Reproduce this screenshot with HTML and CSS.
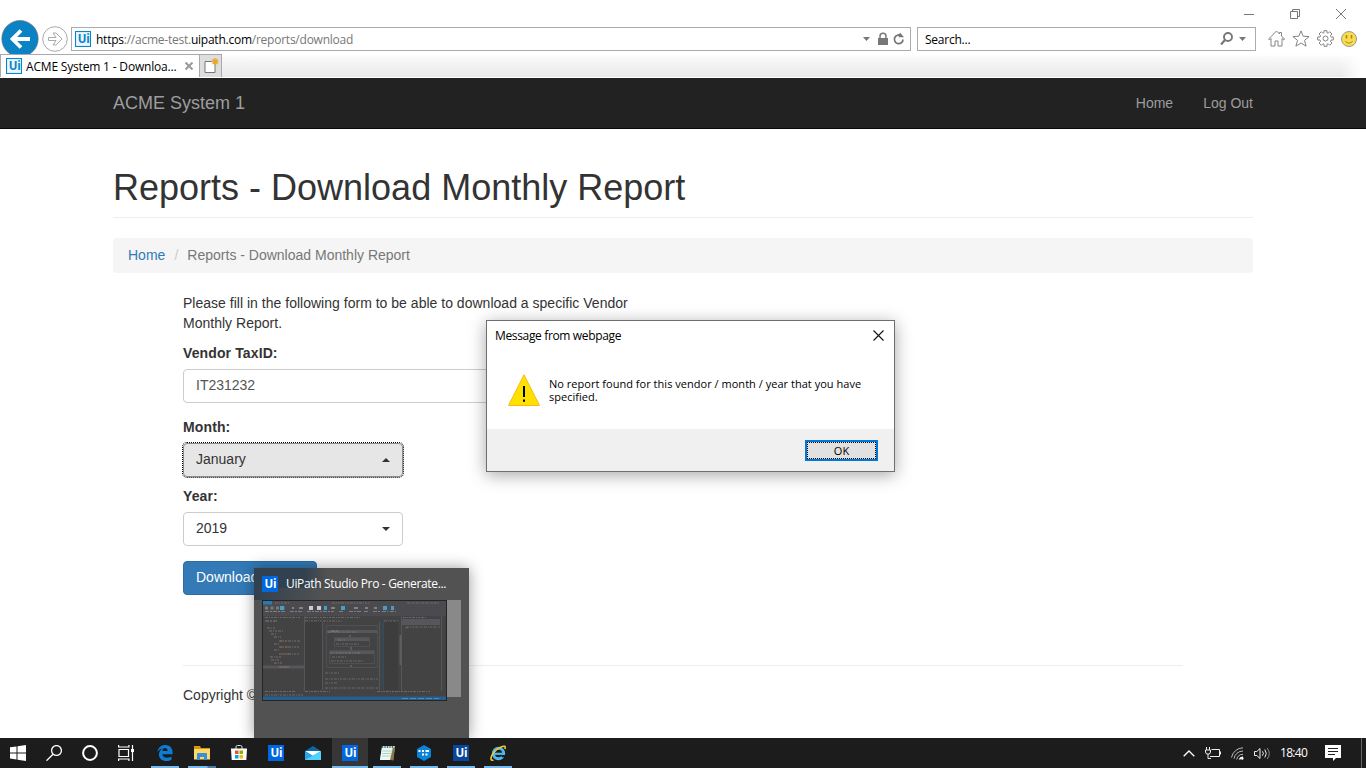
FILE: index.html
```html
<!DOCTYPE html>
<html lang="en">
<head>
<meta charset="utf-8">
<title>ACME System 1 - Download Monthly Report</title>
<link rel="stylesheet" href="styles.css">
</head>
<body>
<div class="desktop">
  <header class="browser">
    <div class="caption">
      <svg width="10" height="10"><path d="M0 5.500h10" stroke="#777"/></svg>
      <svg width="10" height="10" fill="none" stroke="#777"><path d="M.5 2.500h7v7h-7zM2.500 2.500v-2h7v7h-2"/></svg>
      <svg width="10" height="10" stroke="#777"><path d="M0 0l10 10M10 0L0 10"/></svg>
    </div>
    <div class="toolbar">
      <svg class="back" width="38" height="34" viewBox="0 0 38 34"><circle cx="19" cy="18.700" r="18.200" fill="#0a82c4" stroke="#777" stroke-width=".7"/><path d="M29 19H11M20 10.500L11.500 19l8.500 8.500" fill="none" stroke="#fff" stroke-width="3.800"/></svg>
      <svg class="forward" width="26" height="26" fill="none" stroke="#aaa"><circle cx="13" cy="13" r="12.300"/><path d="M6.500 11.500h7.500l-3-4.500h3l6 6-6 6h-3l3-4.500H6.500z"/></svg>
      <div class="field address">
        <svg class="favicon" width="16" height="16"><rect width="16" height="16" fill="#0a85ca"/><rect x="1.500" y="1.500" width="13" height="13" fill="none" stroke="#d9effb"/><text x="2.800" y="12.200">Ui</text></svg>
        <span class="url"><b>https</b>://acme-test.<b>uipath.com</b>/reports/download</span>
        <svg class="addr-icons" width="42" height="16" viewBox="0 0 42 16"><path d="M0 6h7L3.500 10z" fill="#777"/><path d="M15 7h10v7H15z" fill="#777"/><path d="M17 7V5.300a3 3 0 0 1 6 0V7" fill="none" stroke="#777" stroke-width="1.500"/><path d="M40 8.500a4.300 4.300 0 1 1-2-3.800" fill="none" stroke="#777" stroke-width="1.800"/><path d="M37 1.500l4 4.700h-5.500z" fill="#777"/></svg>
      </div>
      <div class="field search">
        <span>Search...</span>
        <svg width="27" height="16" viewBox="0 0 27 16"><circle cx="8" cy="6" r="4" fill="none" stroke="#777" stroke-width="1.900"/><path d="M5 9L1 13.500" stroke="#777" stroke-width="2.200"/><path d="M19 6h7l-3.500 4z" fill="#777"/></svg>
      </div>
      <div class="tools">
        <svg width="17" height="17" fill="none" stroke="#858585"><path d="M.7 9L8.500 1l3 3V2.500h2V6l3 3-.7 1-1.800-1.500v7.500h-4v-5H7v5H3V8.500L1.500 10z"/></svg>
        <svg width="18" height="17" fill="none" stroke="#858585"><path d="M9 .9l2.200 5.300 5.900.4-4.600 3.700 1.600 5.900L9 13l-5.100 3.200 1.600-5.900L.9 6.600l5.900-.4z"/></svg>
        <svg width="17" height="17" viewBox="0 0 17 17" fill="none" stroke="#858585"><circle cx="8.500" cy="8.500" r="2.500"/><path d="M7 .7h3v2l1.200.5 1.500-1.500 2.300 2.300-1.500 1.500.5 1.500h2.300v3H14l-.5 1.500 1.500 1.500-2.300 2.300-1.500-1.500-1.200.5v2H7v-2l-1.200-.5-1.500 1.500L2 13l1.500-1.500L3 10H.7V7H3l.5-1.500L2 4l2.300-2.300 1.500 1.500L7 2.700z"/></svg>
        <svg width="16" height="16"><circle cx="8" cy="8" r="7.500" fill="#fbdc4d" stroke="#999"/><path d="M5.500 4v3.500M10.500 4v3.500" stroke="#a58a20" stroke-width="1.600"/><path d="M4.300 10.200Q8 14 11.700 10.200" fill="none" stroke="#a58a20"/></svg>
      </div>
    </div>
    <div class="tabs">
      <div class="tab">
        <svg class="favicon" width="16" height="16"><rect width="16" height="16" fill="#0a85ca"/><rect x="1.500" y="1.500" width="13" height="13" fill="none" stroke="#d9effb"/><text x="2.800" y="12.200">Ui</text></svg>
        <span>ACME System 1 - Downloa...</span>
        <svg width="8" height="8" stroke="#999" stroke-width="2"><path d="M.5.5l7 7M7.500.5l-7 7"/></svg>
      </div>
      <div class="newtab"><svg width="15" height="16" viewBox="0 0 15 16"><path d="M1 3.500h10v11H1z" fill="#fff" stroke="#777"/><path d="M11 0v7M7.500 3.500h7M8.600 1l5 5M13.500 1l-5 5" stroke="#efa628" stroke-width="1.300"/></svg></div>
    </div>
  </header>

  <nav class="navbar"><span class="brand">ACME System 1</span><a>Home</a><a>Log Out</a></nav>

  <main class="page">
    <h1>Reports - Download Monthly Report</h1>
    <div class="breadcrumb"><a>Home</a><i>/</i><span>Reports - Download Monthly Report</span></div>
    <form class="form">
      <div class="intro"><span>Please fill in the following form to be able to download a specific Vendor</span><span>Monthly Report.</span></div>
      <label>Vendor TaxID:</label>
      <div class="control taxid">IT231232</div>
      <label>Month:</label>
      <div class="control select open">January<svg width="8" height="4"><path d="M0 4h8L4 0z" fill="#333"/></svg></div>
      <label>Year:</label>
      <div class="control select">2019<svg width="8" height="4"><path d="M0 0h8L4 4z" fill="#333"/></svg></div>
      <div class="submit">Download</div>
    </form>
    <footer>Copyright ©</footer>
  </main>

  <section class="dialog">
    <div class="dialog-title"><span>Message from webpage</span><svg width="11" height="11" stroke="#111" stroke-width="1.100"><path d="M.5.5l10 10M10.500.5l-10 10"/></svg></div>
    <div class="dialog-body">
      <svg width="32" height="32"><path d="M16 .8L31.500 31.500H.5z" fill="#ffe100" stroke="#fdb913"/><path d="M16 12v11M16 25.500v2.200" stroke="#000" stroke-width="2"/></svg>
      <p>No report found for this vendor / month / year that you have<br>specified.</p>
    </div>
    <div class="dialog-footer"><div class="ok"><span>OK</span></div></div>
  </section>

  <aside class="preview">
    <div class="preview-title"><svg class="uitile" width="16" height="16"><rect width="16" height="16" fill="#0067df"/><text x="2.500" y="12.200">Ui</text></svg><span>UiPath Studio Pro - Generate...</span></div>
    <div class="preview-shot">
      <svg width="185" height="101" viewBox="0 0 185 101">
        <rect width="185" height="101" fill="#252525"/><rect x="1" y="1" width="183" height="99" fill="#434343"/>
        <path fill="#4b4b4f" d="M1 1h183v15H1z"/><path fill="#287ab5" d="M1 1h9v3.500H1z"/><path fill="#245f90" d="M1 96.500h183v3.500H1z"/>
        <path fill="#3d3d3d" d="M43 21h18v69H43zM122 21h14v69h-14z"/>
        <path stroke="#565659" d="M42.500 16v75M60.500 22v68M117.500 22v68M139.500 16v75M179.500 16v75"/>
        <path stroke="#28506e" d="M121.500 22v68"/><path stroke="#5e5e62" d="M138.500 35v30" stroke-width="2"/>
        <path fill="#56565c" d="M1 65.500h41v3H1zM140 19h38v6h-38zM65 30h50v3H65zM73 38h35v3H73zM67 51h46v3H67z"/>
        <g fill="none" stroke="#505053"><path d="M64.500 25.500h51v42h-51zM72.500 37.500h35v9h-35zM67.500 50.500h45v13h-45z"/></g>
        <g stroke="#999" stroke-dasharray="3 1 1 1 2 1"><path d="M13 3h14M70 3h37M145 3h32M3 17.500h36M43 17.500h55M141 17.500h24M43 21h37M122 21h15M66 32h28M76 40h7M68 53h30M74 44h24M70 57h14M69 61h32M63 73h15M63 79h54M63 83h13M63 88h54M3 91.500h30M43 91.500h25M115 91.500h54M3 95h38M144 27h34" opacity=".45"/><path d="M5 28h8M7 31h14M9 34h5M12 37h7M17 41h22M12 44h6M17 47h20M12 50h5M17 54h20M8 57h11M9 60h8M12 63h8M17 67h10" opacity=".55"/></g>
        <path stroke="#a05850" stroke-dasharray="3 2" d="M18 41h6M18 47h8M20 54h8M20 67h6M143 28h4" opacity=".8"/>
        <path stroke="#aaa" stroke-width="3" stroke-dasharray="3 2.500" d="M3 8h21" opacity=".5"/>
        <path stroke="#aaa" stroke-width="2" d="M30 8h2M37 8h4M69 8h4M92 8h4M103 8h3M112 8h3" opacity=".6"/>
        <path stroke="#ccc" stroke-width="4" d="M47 8h4M55 8h4"/>
        <path stroke="#459fce" stroke-width="4" d="M18 8h4M62 8h3M79 8h4M121 8h4M129 8h3"/>
        <path stroke="#aaa" stroke-dasharray="4 1 2 1" d="M3 11.500h21M28 11.500h13M45 11.500h27M77 11.500h5M87 11.500h12M102 11.500h5M111 11.500h7M120 11.500h6M128 11.500h6M3 21h12M69 31h8" opacity=".55"/>
        <path d="M88 35v2M89 47v3M89 65v2" stroke="#777"/><path stroke="#6ba4cc" stroke-dasharray="6 2" d="M140 98.500h37" opacity=".6"/>
      </svg>
    </div>
  </aside>

  <div class="taskbar">
    <div class="sys"><svg width="16" height="16" fill="#fff"><path d="M0 2.300l6.500-.9v6H0zM7.500 1.300L16 0v7.400H7.500zM0 8.500h6.500v6L0 13.600zM7.500 8.500H16V16l-8.500-1.200z"/></svg></div>
    <div class="sys"><svg width="16" height="16" fill="none" stroke="#fff" stroke-width="1.300"><circle cx="10.500" cy="5.500" r="4.900"/><path d="M7 9.200L.5 15.700"/></svg></div>
    <div class="sys"><svg width="16" height="16" fill="none" stroke="#fff" stroke-width="2"><circle cx="8" cy="8" r="6.900"/></svg></div>
    <div class="sys"><svg width="16" height="16" fill="none" stroke="#fff" stroke-width="1.200"><path d="M1 4.500h9.500v7H1zM.6 0v2h10.300V0M.6 16v-2h10.300v2M14.500 0v16"/><path d="M13 4h3v3h-3z" fill="#fff" stroke="none"/></svg></div>
    <div class="apps">
      <div class="app running"><svg width="16" height="16" viewBox="0 0 16 16"><path fill="#0c7cd6" d="M.4 7C1.200 2.500 4.300 0 8.300 0c4.500 0 7.300 3.200 7.300 7.300v2H5.300c.2 2.500 2.400 3.500 4.900 3.500 1.700 0 3.200-.5 4.300-1.200v3.200C13.300 15.600 11.500 16 9.500 16 4.800 16 1.900 13.300 1.900 9.500c0-2.600 1.400-4.700 4-6C3.600 3.700 1.700 5 .4 7zm5-1h5.200c0-1.900-1-2.900-2.600-2.900C6.600 3.100 5.600 4.300 5.400 6z"/></svg></div>
      <div class="app running grouped"><svg width="16" height="14" viewBox="0 0 16 14"><path d="M0 0h6l1 2h9v11H0z" fill="#d9980b"/><path d="M0 3h16v10.500H0z" fill="#ffd76b"/><path d="M3 14V8q0-1 1-1h8q1 0 1 1v6h-3v-3H6v3z" fill="#368fdb"/></svg></div>
      <div class="app"><svg width="16" height="16"><path d="M5 4V2q0-1.500 1.500-1.500h3Q11 .5 11 2v2" fill="none" stroke="#ddd"/><path d="M0 3.500h16l-.7 11.500H.7z" fill="#fff"/><path d="M4 5.500h3.500V9H4z" fill="#f25022"/><path d="M8.500 5.500H12V9H8.500z" fill="#7fba00"/><path d="M4 10h3.500v3.500H4z" fill="#00a4ef"/><path d="M8.500 10H12v3.500H8.500z" fill="#ffb900"/></svg></div>
      <div class="app"><svg class="uitile" width="16" height="16"><rect width="16" height="16" fill="#0067df"/><text x="2.500" y="12.200">Ui</text></svg></div>
      <div class="app"><svg width="16" height="14"><path d="M0 5l8-5 8 5v9H0z" fill="#0b66a8"/><path d="M0 5h16L8 10z" fill="#fff"/><path d="M0 5l8 5 8-5v9H0z" fill="#28a8ea"/><path d="M0 14L16 5v9z" fill="#50d0fa"/></svg></div>
      <div class="app running active"><svg class="uitile" width="16" height="16"><rect width="16" height="16" fill="#0067df"/><text x="2.500" y="12.200">Ui</text></svg></div>
      <div class="app running"><svg width="16" height="16"><path d="M3 1h13l-2 14H1z" fill="#b0d9d1"/><path d="M3 3h10l-1.500 12H1z" fill="#eef8f3"/><path d="M3.500 6h9M3.200 8.500h9M3 11h9" stroke="#b1cfca"/><path d="M3.500 1v2M6 1v2M8.500 1v2M11 1v2M13.500 1v2" stroke="#626e6c"/><path d="M14 3l2-1-1.500 13.500L11 15z" fill="#8d7446"/></svg></div>
      <div class="app running"><svg width="16" height="16"><path d="M8 0l7 4v8l-7 4-7-4V4z" fill="#0983dc"/><path d="M2.500 6h2M6 6h2M9.500 6h3.500M6 9.500h2M9.500 9.500h2" stroke="#fff" stroke-width="2"/></svg></div>
      <div class="app running"><svg class="uitile" width="16" height="16"><rect width="16" height="16" fill="#08469b"/><text x="2.500" y="12.200">Ui</text></svg></div>
      <div class="app running"><svg width="16" height="16" viewBox="0 0 16 16"><circle cx="8.500" cy="8.500" r="5.200" fill="none" stroke="#4bb9ee" stroke-width="3"/><path d="M4 8.800h11" stroke="#4bb9ee" stroke-width="2.200"/><path d="M11 10h5v2.200h-4z" fill="#1c1c1c"/><path d="M3.500 15.300C-.2 16 .2 11.500 4.200 6.900S15 .1 15 1.700c.4.700.2 1.500-.1 2.300" fill="none" stroke="#f7c52c" stroke-width="1.600"/></svg></div>
    </div>
    <div class="tray">
      <svg width="12" height="7" fill="none" stroke="#fff" stroke-width="1.300"><path d="M.7 6.300L6 1l5.300 5.300"/></svg>
      <svg width="16" height="12" fill="none" stroke="#eee"><path d="M6.500 2.500h8v7H5M15.500 4.500v3M1.500 0v3M4.500 0v3M.5 3h5v2l-1 2h-3l-1-2zM3 7v4.500h3"/></svg>
      <svg width="13" height="13" fill="none" stroke="#bbb"><path d="M.5 10.500A12 12 0 0 1 12 .8M3 11.700A9 9 0 0 1 12 4M5.700 12.500A6.500 6.500 0 0 1 12 7.300"/><path d="M8.500 12.500a3.500 3.500 0 0 1 3.500-2.300" stroke="#fff" stroke-width="1.500"/><circle cx="11.300" cy="11.500" r="1.200" fill="#fff" stroke="none"/></svg>
      <svg width="17" height="13" fill="none" stroke="#eee"><path d="M.5 4.500h2.300L6 1.500v10L2.800 8.500H.5zM8.500 4.300q1.700 2.200 0 4.400M10.800 2.500q3 4 0 8"/><path d="M13.200 1q4.200 5.500 0 11" stroke="#888"/></svg>
      <span class="clock">18:40</span>
      <svg class="notes" width="16" height="16"><path d="M0 0h16v13h-5l-3 3v-3H0z" fill="#fff"/><path d="M3 3.500h10M3 6.500h10M3 9.500h7" stroke="#222"/></svg>
      <i class="peek"></i>
    </div>
  </div>
</div>
</body>
</html>
```
FILE: styles.css
```css
* { box-sizing: border-box; }
body { margin: 0; }
svg { display: block; flex: none; }
.desktop { position: relative; width: 1366px; height: 768px; overflow: hidden; display: flex; flex-direction: column; background: #fff; font: 14px/20px "Liberation Sans", Arial, sans-serif; color: #333; }

.browser { height: 78px; flex: none; display: flex; flex-direction: column; font: 12px/16px "Open Sans", "Noto Sans", sans-serif; letter-spacing: -.24px; color: #000; }
.caption { height: 20px; display: flex; justify-content: flex-end; align-items: flex-start; gap: 36px; padding: 9px 20px 0 0; }
.toolbar { height: 34px; display: flex; align-items: flex-start; padding-left: 1px; }
.back { margin-right: 3px; }
.forward { margin-top: 6px; margin-right: 3px; }
.field { height: 24px; margin-top: 7px; border: 1px solid #ababab; display: flex; align-items: center; }
.field span { padding-top: 2px; }
.address { width: 840px; padding: 0 5px 0 3px; }
.url { margin-left: 5px; flex: 1; color: #777; }
.url b { font-weight: 400; color: #000; }
.search { width: 339px; margin-left: 6px; padding: 0 8px 0 7px; justify-content: space-between; }
.favicon text { font: 700 11.5px "Open Sans", sans-serif; fill: #0a85ca; letter-spacing: -.3px; }
.favicon rect + rect { fill: #eaf6fd; }
.tools { display: flex; gap: 7px; margin: 10px 0 0 12px; align-items: center; }
.tabs { height: 24px; display: flex; border-bottom: 1px solid #fff; background: linear-gradient(90deg, transparent 1340px, #fff 1362px), linear-gradient(#fff, #f8f8f8 20%, #e9e9e9); }
.tab { width: 200px; border: 1px solid #aaa; border-bottom: 0; background: #fff; display: flex; align-items: center; padding-left: 5px; }
.tab span { width: 159px; margin: 0 5px 0 4px; padding-top: 2px; white-space: nowrap; letter-spacing: -.18px; }
.tab span + svg { margin-left: -5px; }
.newtab { width: 22px; border: 1px solid #aaa; border-left: 0; border-bottom: 0; background: #dedede; padding: 3px 0 0 4px; }

.navbar { height: 51px; flex: none; background: #222; border-bottom: 1px solid #080808; padding: 0 113px; display: flex; align-items: center; color: #9d9d9d; }
.brand { font-size: 18px; flex: 1; }
.navbar a + a { margin-left: 30px; }

.page { flex: 1; min-height: 0; overflow: hidden; padding: 39px 113px 0; }
h1 { margin: 0; height: 50px; font-size: 36px; line-height: 40px; font-weight: 400; border-bottom: 1px solid #eee; }
.breadcrumb { margin-top: 20px; height: 35px; background: #f5f5f5; border-radius: 4px; padding: 7px 15px; display: flex; color: #777; }
.breadcrumb a { color: #337ab7; }
.breadcrumb i { width: 22px; text-align: center; color: #ccc; font-style: normal; }
.form { display: flex; flex-direction: column; width: 450px; margin: 20px 0 0 70px; }
.intro { display: flex; flex-direction: column; align-items: flex-start; margin-bottom: 10px; letter-spacing: .015px; white-space: nowrap; }
.form label { align-self: flex-start; font-weight: 700; margin-bottom: 6px; letter-spacing: .12px; }
.control { height: 34px; border: 1px solid #ccc; border-radius: 4px; padding: 5px 12px; }
.taxid { color: #555; margin-bottom: 14px; }
.select { width: 220px; display: flex; justify-content: space-between; }
.select svg { margin-top: 9px; }
.open { background: #e6e6e6; border-color: #8c8c8c; outline: 1px dotted #000; margin-bottom: 9px; }
.submit { margin-top: 15px; width: 134px; height: 34px; border: 1px solid #2e6da4; border-radius: 4px; background: #337ab7; color: #fff; padding: 5px 12px; }
footer { margin: 70px 70px 0; border-top: 1px solid #eee; padding-top: 19px; }

.dialog { position: absolute; left: 486px; top: 320px; width: 409px; height: 152px; border: 1px solid #6e6e6e; background: #fff; box-shadow: 0 3px 16px rgba(0,0,0,.35); display: flex; flex-direction: column; font: 11px/13px "Open Sans", "Noto Sans", sans-serif; color: #000; }
.dialog-title { height: 28px; display: flex; justify-content: space-between; align-items: center; padding: 0 10px 0 8px; font-size: 12px; letter-spacing: -.35px; }
.dialog-title span { padding-top: 1px; }
.dialog-body { flex: 1; display: flex; padding: 25px 0 0 21px; gap: 9px; }
.dialog-body p { margin: 3px 0 0; white-space: nowrap; letter-spacing: .025px; }
.dialog-footer { height: 42px; background: #f0f0f0; display: flex; justify-content: flex-end; padding: 11px 16px 0 0; }
.ok { width: 73px; height: 21px; border: 2px solid #0078d7; background: #e1e1e1; display: flex; }
.ok span { flex: 1; border: 1px dotted #000; text-align: center; line-height: 15px; }

.preview { position: absolute; left: 254px; top: 568px; width: 215px; height: 170px; background: linear-gradient(90deg, #32414f 50px, transparent 74px) 0 0 / 100% 20px no-repeat, linear-gradient(90deg, #32414f, #525252 70px) 0 20px / 72px 12px no-repeat, #525252; box-shadow: 0 0 14px rgba(0,0,0,.4); padding: 8px; display: flex; flex-direction: column; gap: 8px; }
.preview-title { display: flex; gap: 8px; height: 16px; font: 12px/16px "Open Sans", "Noto Sans", sans-serif; letter-spacing: -.33px; color: #fff; white-space: nowrap; }
.preview-shot { width: 199px; height: 97px; background: #898989; }
.uitile text { font: 700 11.5px "Open Sans", sans-serif; fill: #fff; letter-spacing: -.3px; }

.taskbar { position: relative; height: 30px; flex: none; background: #1c1c1c; display: flex; }
.sys { width: 36px; display: flex; align-items: center; justify-content: center; }
.apps { display: flex; margin-left: 3px; gap: 1px; }
.app { width: 36px; display: flex; align-items: center; justify-content: center; }
.running { background: linear-gradient(#76b9ed, #76b9ed) 4px 28px / 28px 2px no-repeat; }
.grouped { background: linear-gradient(90deg, #76b9ed 19px, #4c7ba3 20px) 4px 28px / 28px 2px no-repeat; }
.active { background: linear-gradient(#76b9ed, #76b9ed) 0 28px / 36px 2px no-repeat, #363636; }
.tray { margin-left: auto; display: flex; align-items: center; }
.tray svg { margin-right: 10px; }
.clock { width: 27px; margin-right: 18px; color: #fff; font: 12px/16px "Open Sans", sans-serif; letter-spacing: -.7px; white-space: nowrap; }
.tray svg:nth-of-type(4) { margin-right: 9px; }
.tray .notes { margin-right: 20px; }
.peek { width: 1px; height: 30px; background: #666; margin-right: 4px; }
```
